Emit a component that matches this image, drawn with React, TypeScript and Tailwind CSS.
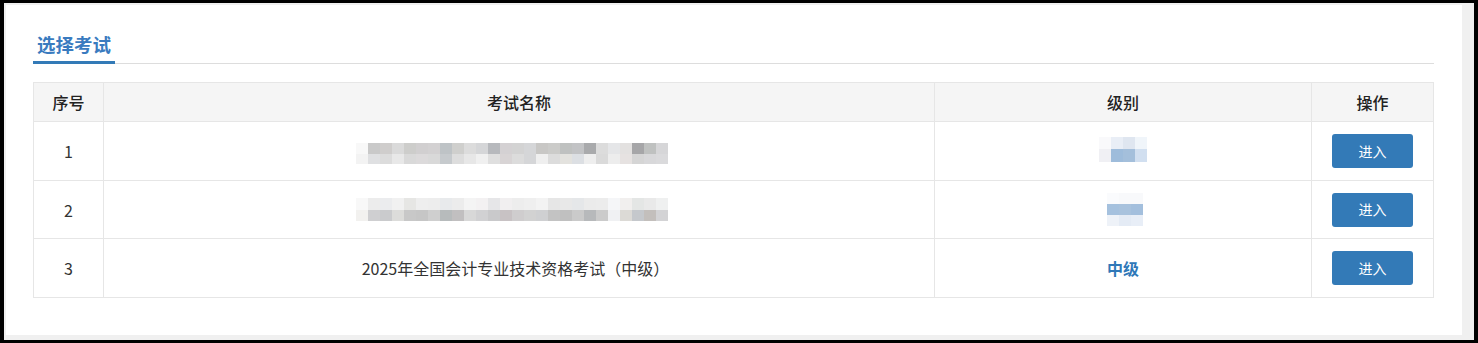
const FONT = "font-['Noto_Sans_CJK_SC','Noto_Sans',sans-serif]";

// 打码区块（马赛克）颜色
const nameMosaics: string[][][] = [
  [
    ["#f8f8f8", "#c9c9c9", "#cfcdcc", "#dadada", "#cdcdcb", "#d1cfd0", "#d3d1d2", "#bec3c6", "#cfcfcd", "#dcdcdc", "#d5d6d8", "#b7b9bd", "#d4d1d3", "#d3d3d3", "#d5d6d8", "#c8c7c5", "#cbcbc9", "#bfc1c0", "#c2c3c5", "#a9aaac", "#dcdcdc", "#e5e6e8", "#e3e1e0", "#a6a6a8", "#bfc1c0", "#d6d6d8"],
    ["#f3f3f3", "#dfe0e2", "#dcdcdc", "#e8e8e8", "#d9d9d9", "#dcdadb", "#d9d9d9", "#c6cacd", "#dddddd", "#e7e7e7", "#f0f0f0", "#dfdfdf", "#d8d4d5", "#dcdcdc", "#d5d6d8", "#efefef", "#dcdcdc", "#e3e2de", "#dcdfe3", "#eeeeee", "#dadada", "#ededed", "#e6e2e1", "#d5d5d5", "#d8d8da", "#dadadc"],
  ],
  [
    ["#f8f8f8", "#ececec", "#ebecee", "#f1f1f1", "#e6e6e4", "#eeeeee", "#ededed", "#e8eaec", "#ececec", "#f4f4f4", "#f3f1f2", "#e6e6e8", "#f1eff0", "#ededed", "#efefef", "#f3f3f3", "#e6e6e6", "#e8e8e8", "#e5e7e9", "#ebebeb", "#ececec", "#f5f6f8", "#f1efee", "#e4e6e5", "#e9e9e9", "#eff0f0"],
    ["#f2f1ef", "#cfcfd1", "#cacbcd", "#dcdcda", "#c8c8c8", "#c6c6c6", "#cfcfcf", "#b7bbbc", "#c1bfc0", "#d8d8d8", "#d1d1d3", "#c9c9cb", "#c8c2c4", "#cfcdce", "#d2d2d2", "#cfd0d2", "#c3c3c3", "#c0c0c0", "#cacaca", "#b7b9bb", "#cbcbcb", "#f0f1f3", "#dcdad6", "#c5c8cc", "#c3bfbc", "#d3d3d5"],
  ],
];

const levelMosaics: string[][][] = [
  [
    ["#f9f9fb", "#e9eef6", "#dfe6f0", "#f0f5fa"],
    ["#f0f0f4", "#9ebcdb", "#a4bfdb", "#d1dff0"],
  ],
  [
    ["#fafbfd", "#f8f9fb", "#f8f9fb"],
    ["#a5c1de", "#a8c2dd", "#a3bfdd"],
    ["#eef2f8", "#e4ebf5", "#e8eef7"],
  ],
];

function Mosaic({ rows, cellH }: { rows: string[][]; cellH: number }) {
  return (
    <div className="flex flex-col">
      {rows.map((row, r) => (
        <div key={r} className="flex">
          {row.map((c, i) => (
            <div key={i} className="w-[12px]" style={{ backgroundColor: c, height: cellH }} />
          ))}
        </div>
      ))}
    </div>
  );
}

const rows = [
  { no: 1, h: "h-[59px]", name: <div className="mt-[5px] mr-[14px]"><Mosaic rows={nameMosaics[0]} cellH={10.5} /></div>, level: <div className="-mt-[4px]"><Mosaic rows={levelMosaics[0]} cellH={12.5} /></div> },
  { no: 2, h: "h-[58px]", name: <div className="mr-[14px]"><Mosaic rows={nameMosaics[1]} cellH={11.5} /></div>, level: <div className="ml-[3px]"><Mosaic rows={levelMosaics[1]} cellH={11} /></div> },
  {
    no: 3,
    h: "h-[59px]",
    name: <span className="mr-[7px]">2025年全国会计专业技术资格考试（中级）</span>,
    level: <span className="font-bold text-[#2f78b8]">中级</span>,
  },
];

export default function App() {
  return (
    <div className={`min-h-screen bg-black pt-[3px] pb-[3px] pl-[4px] pr-[4px] ${FONT}`}>
      <div className="bg-[#f0f0f0] pt-[2px] pl-[2px] pr-[12px] pb-[5px]">
        <div className="h-[330px] bg-white pl-[27px] pr-[28px] pt-[27px]">
          {/* 标题 */}
          <div className="flex border-b border-[#dddddd]">
            <div className="-mb-px border-b-[3px] border-[#337ab7] px-1 pb-[5px] text-[18.5px] font-bold leading-[24px] text-[#3a7bbf]">
              选择考试
            </div>
          </div>

          {/* 表格 */}
          <div className="mt-[18px] grid grid-cols-[70px_831px_377px_1fr] border-l border-t border-[#e6e6e6] text-[16px] text-[#333]">
            {["序号", "考试名称", "级别", "操作"].map((t) => (
              <div
                key={t}
                className="flex h-[39px] items-center justify-center border-b border-r border-[#e6e6e6] bg-[#f5f5f5] font-medium text-[#222]"
              >
                {t}
              </div>
            ))}
            {rows.map((r) => (
              <div key={r.no} className="contents">
                <div className={`flex ${r.h} items-center justify-center border-b border-r border-[#e6e6e6]`}>{r.no}</div>
                <div className={`flex ${r.h} items-center justify-center border-b border-r border-[#e6e6e6]`}>{r.name}</div>
                <div className={`flex ${r.h} items-center justify-center border-b border-r border-[#e6e6e6]`}>{r.level}</div>
                <div className={`flex ${r.h} items-center justify-center border-b border-r border-[#e6e6e6]`}>
                  <button className="h-[34px] w-[81px] rounded-[3px] bg-[#337ab7] text-[14px] text-white">进入</button>
                </div>
              </div>
            ))}
          </div>
        </div>
      </div>
    </div>
  );
}
